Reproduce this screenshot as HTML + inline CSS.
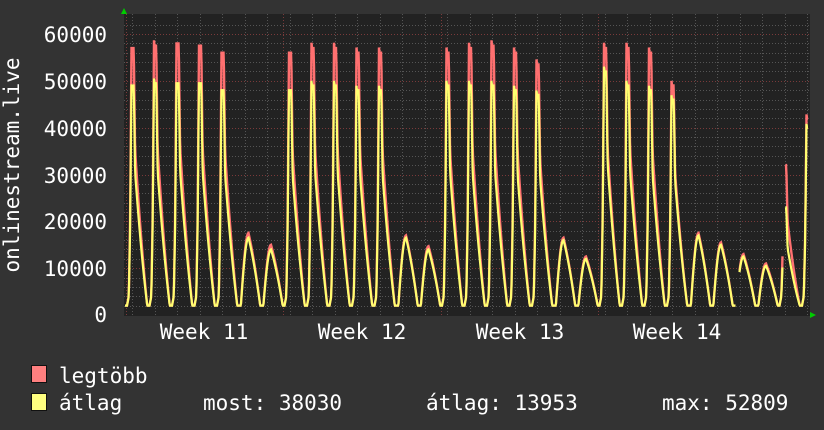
<!DOCTYPE html>
<html><head><meta charset="utf-8"><style>
html,body{margin:0;padding:0;background:#333;}
svg{display:block}
text{font-family:"DejaVu Sans Mono","Liberation Mono",monospace;font-size:21px;fill:#fff;}
</style></head><body>
<svg id="s" width="824" height="430" xmlns="http://www.w3.org/2000/svg">
<rect width="824" height="430" fill="#333"/>
<rect x="124" y="14" width="686" height="302" fill="#222"/>
<g id="grid"></g>
<path id="mx" fill="none" stroke="#ff7070" stroke-width="2.4"/>
<path id="av" fill="none" stroke="#ffff70" stroke-width="2.2"/>
<text x="107" y="42" text-anchor="end">60000</text>
<text x="107" y="89" text-anchor="end">50000</text>
<text x="107" y="136" text-anchor="end">40000</text>
<text x="107" y="183" text-anchor="end">30000</text>
<text x="107" y="229" text-anchor="end">20000</text>
<text x="107" y="276" text-anchor="end">10000</text>
<text x="107" y="322" text-anchor="end">0</text>
<text transform="translate(19,165) rotate(-90)" text-anchor="middle">onlinestream.live</text>
<text x="204" y="339" text-anchor="middle">Week 11</text>
<text x="362" y="339" text-anchor="middle">Week 12</text>
<text x="520" y="339" text-anchor="middle">Week 13</text>
<text x="677" y="339" text-anchor="middle">Week 14</text>
<polygon points="121,14 127,14 124,8" fill="#0c0"/>
<polygon points="810,312 810,318 816,315" fill="#0c0"/>
<rect x="31.5" y="365.5" width="15" height="17" fill="#ff8080" stroke="#111"/>
<rect x="31.5" y="393.5" width="15" height="17" fill="#ffff80" stroke="#111"/>
<text x="59" y="383">legtöbb</text>
<text x="59" y="410">átlag</text>
<text x="203" y="410">most: 38030</text>
<text x="426" y="410">átlag: 13953</text>
<text x="662" y="410">max: 52809</text>
</svg>
<script>
var ns="http://www.w3.org/2000/svg",g=document.getElementById('grid');
function Y(v){return 315-v*281/60000;}
function line(x1,y1,x2,y2,c){var l=document.createElementNS(ns,'line');l.setAttribute('x1',x1);l.setAttribute('y1',y1);l.setAttribute('x2',x2);l.setAttribute('y2',y2);l.setAttribute('stroke',c);l.setAttribute('stroke-dasharray','1,2');g.appendChild(l);}
for(var v=2000;v<64000;v+=2000){var y=Math.round(Y(v))+.5;line(124,y,810,y,v%10000==0?'#7a3a3a':'#555');}
for(var x=132;x<810;x+=22.5){var xx=Math.round(x)+.5;line(xx,14,xx,316,'#555');}
[126,283,441,598].forEach(function(x){line(x+.5,14,x+.5,316,'#7a3a3a');});
var peaks=[[57,49],[57.5,49.5],[58,49.5],[57.5,49.5],[56,48],[17.5,16.5],[15,14],
[56,48],[57,49],[57,49],[56,48],[56,48],[17,16.5],[14.7,14],
[56,49],[57,49],[57.5,49],[56,48],[53.5,47],[16.5,16],[12.5,12],
[57,52],[57,49],[56,48],[49,46],[17.5,17],[15.5,15],[13,12.5],[11,10.5],[32,23],[42,40]];
function wk(t,p){var b=2;
 if(t<0.08) return b+(t/0.08)*2;
 if(t<0.14) return b+2+(t-0.08)/0.06*(p*0.3);
 if(t<0.2) return b+2+p*0.3+(t-0.14)/0.06*(p*0.72-b-2);
 if(t<0.3) return p;
 if(t<0.36) return p-(t-0.3)/0.06*p*0.38;
 if(t<0.9){var f=(t-0.36)/0.54; return b+(p*0.62-b)*(1-f)*(1-0.25*f);}
 return b;}
function we(t,p){var b=2;
 if(t<0.06) return b;
 if(t<0.4){var f=(t-0.06)/0.34;return b+(p-b)*Math.sin(f*Math.PI/2);}
 var f=(t-0.4)/0.52; if(f>1)return b; return b+(p-b)*(1-f*f*0.3-f*0.7);}
var mp="",ap="",pen=false;
for(var x=125;x<=808;x+=0.5){
 var d=(x-127)/22.5,i=Math.floor(d),t=d-i;
 if(i<0){i=0;t=0;}
 if(i>=peaks.length)i=peaks.length-1;
 var p=peaks[i],isWe=p[0]<20;
 var m=isWe?we(t,p[0]):wk(t,p[0]),a=isWe?we(t,p[1]):wk(t,p[1]);
 var gap=(x>=736&&x<=739)||(x>=783&&x<=785);
 if(gap){pen=false;continue;}
 var c=pen?"L":"M";pen=true;
 mp+=c+x+","+Y(m*1000).toFixed(1);
 ap+=c+x+","+Y(a*1000).toFixed(1);
}
document.getElementById('mx').setAttribute('d',mp);
document.getElementById('av').setAttribute('d',ap);
</script>
</body></html>
